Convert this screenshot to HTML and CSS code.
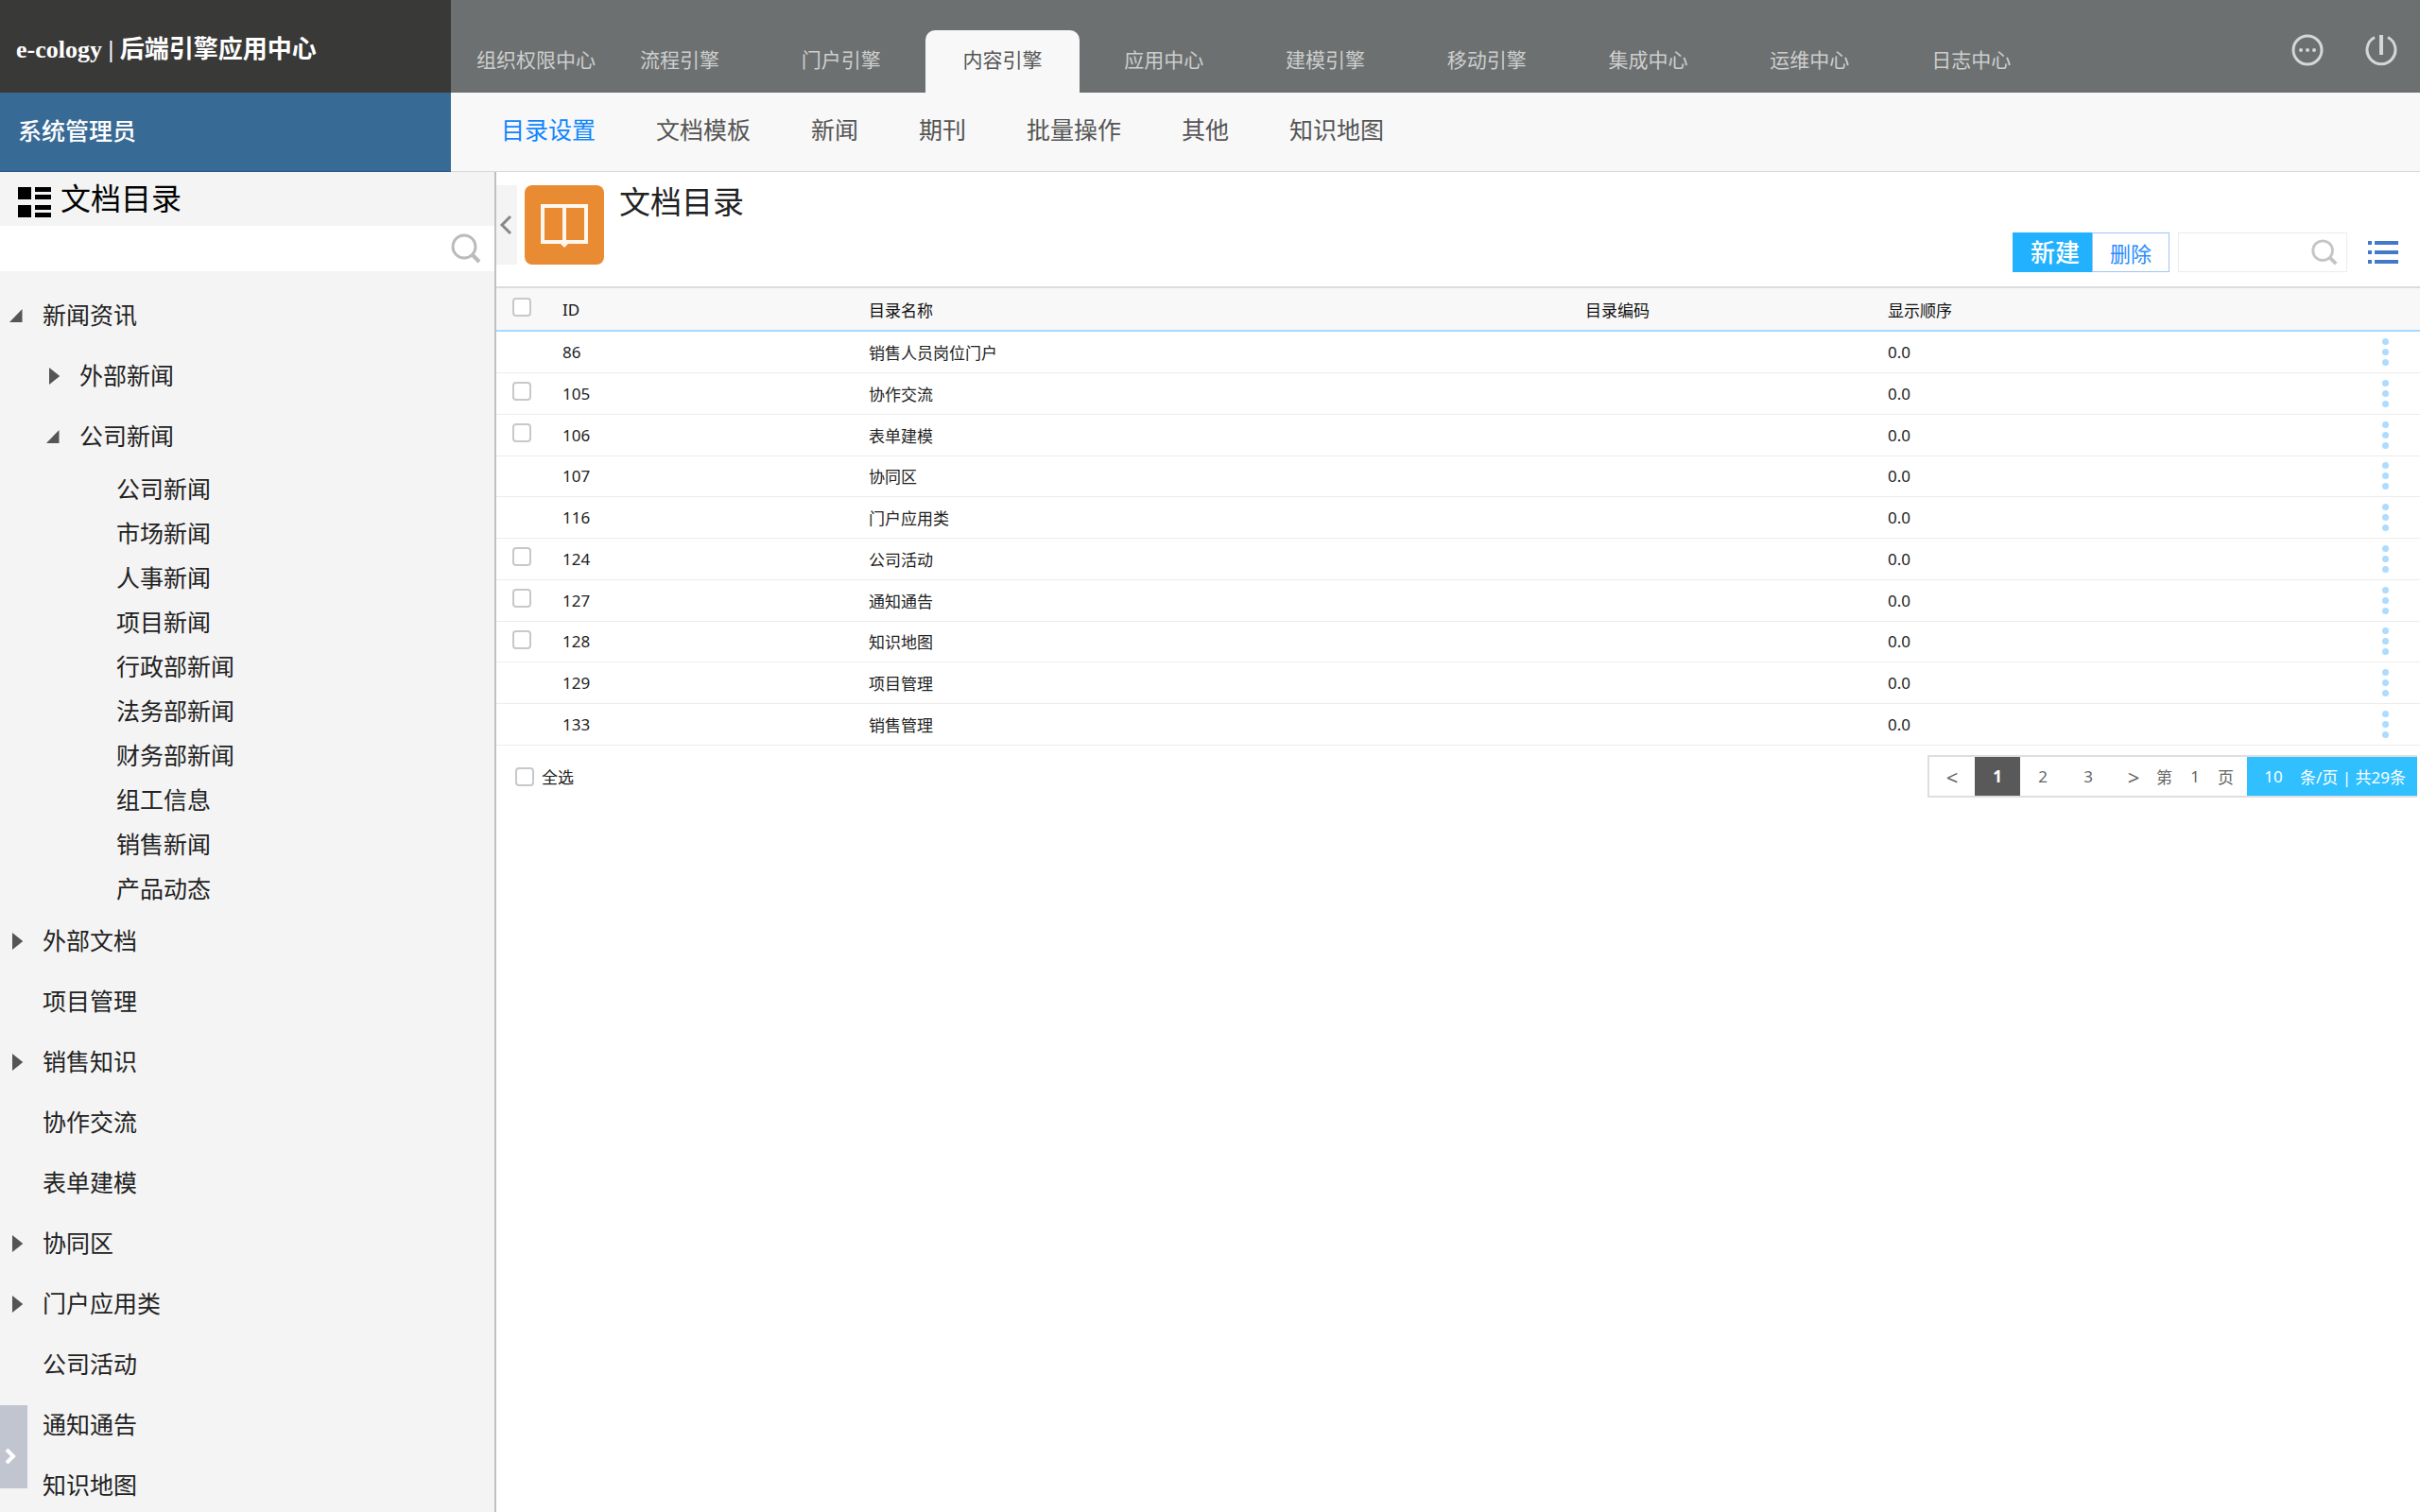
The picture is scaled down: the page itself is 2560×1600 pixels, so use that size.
FILE: index.html
```
<!DOCTYPE html>
<html lang="zh-CN">
<head>
    <meta charset="UTF-8">
    <meta name="viewport" content="width=device-width, initial-scale=1.0">
    <title>后端引擎应用中心</title>
    <link rel="stylesheet" href="styles.css">
</head>

<body>
    <!-- Header Section -->
    <header>
        <div class="brand">
            <h1>e-cology | 后端引擎应用中心</h1>
            <p class="user">系统管理员</p>
        </div>
        <div class="menus">
            <div class="top-bar">
                <nav class="tabs">
                    <a href="#" class="first">组织权限中心</a>
                    <a href="#">流程引擎</a>
                    <a href="#">门户引擎</a>
                    <a href="#" class="active">内容引擎</a>
                    <a href="#">应用中心</a>
                    <a href="#">建模引擎</a>
                    <a href="#">移动引擎</a>
                    <a href="#">集成中心</a>
                    <a href="#">运维中心</a>
                    <a href="#">日志中心</a>
                </nav>
                <div class="actions">
                    <button type="button" aria-label="更多">
                        <svg width="34" height="34" viewBox="0 0 34 34">
                            <circle cx="17" cy="17" r="15" fill="none" stroke="#d5d6d6" stroke-width="3"/>
                            <circle cx="10" cy="17" r="2" fill="#d5d6d6"/>
                            <circle cx="17" cy="17" r="2" fill="#d5d6d6"/>
                            <circle cx="24" cy="17" r="2" fill="#d5d6d6"/>
                        </svg>
                    </button>
                    <button type="button" aria-label="退出">
                        <svg width="34" height="34" viewBox="0 0 34 34" fill="none" stroke="#d5d6d6" stroke-width="3">
                            <path d="M10 3.5A15 15 0 1 0 24 3.5"/>
                            <path d="M17 1v21" stroke-width="4"/>
                        </svg>
                    </button>
                </div>
            </div>
            <nav class="sub-nav">
                <a href="#" class="active">目录设置</a>
                <a href="#">文档模板</a>
                <a href="#">新闻</a>
                <a href="#">期刊</a>
                <a href="#">批量操作</a>
                <a href="#">其他</a>
                <a href="#">知识地图</a>
            </nav>
        </div>
    </header>

    <div class="container">
        <!-- Sidebar -->
        <aside>
            <div class="side-title">
                <svg width="36" height="34" viewBox="0 0 36 34">
                    <path d="M1 1h14v13H1zM1 20h14v13H1zM19 1h17v5H19zM19 9h17v5H19zM19 20h17v5H19zM19 28h17v5H19z"/>
                </svg>
                <h2>文档目录</h2>
            </div>
            <div class="side-search">
                <input type="text" aria-label="搜索目录">
                <svg width="32" height="32" viewBox="0 0 32 32" fill="none" stroke="#bbb">
                    <circle cx="14" cy="14" r="12" stroke-width="3"/>
                    <path d="M23 23l7 7" stroke-width="4"/>
                </svg>
            </div>
            <ul class="tree">
                <li><a href="#" class="open">新闻资讯</a>
                    <ul>
                        <li><a href="#" class="closed">外部新闻</a></li>
                        <li><a href="#" class="open">公司新闻</a>
                            <ul class="leaves">
                                <li><a href="#">公司新闻</a></li>
                                <li><a href="#">市场新闻</a></li>
                                <li><a href="#">人事新闻</a></li>
                                <li><a href="#">项目新闻</a></li>
                                <li><a href="#">行政部新闻</a></li>
                                <li><a href="#">法务部新闻</a></li>
                                <li><a href="#">财务部新闻</a></li>
                                <li><a href="#">组工信息</a></li>
                                <li><a href="#">销售新闻</a></li>
                                <li><a href="#">产品动态</a></li>
                            </ul>
                        </li>
                    </ul>
                </li>
                <li><a href="#" class="closed">外部文档</a></li>
                <li><a href="#">项目管理</a></li>
                <li><a href="#" class="closed">销售知识</a></li>
                <li><a href="#">协作交流</a></li>
                <li><a href="#">表单建模</a></li>
                <li><a href="#" class="closed">协同区</a></li>
                <li><a href="#" class="closed">门户应用类</a></li>
                <li><a href="#">公司活动</a></li>
                <li><a href="#">通知通告</a></li>
                <li><a href="#">知识地图</a></li>
            </ul>
            <button type="button" class="drawer" aria-label="展开">
                <svg width="12" height="18" viewBox="0 0 12 18" fill="none" stroke="#fff" stroke-width="4">
                    <path d="M2 2l7 7-7 7"/>
                </svg>
            </button>
        </aside>

        <!-- Content Section -->
        <main>
            <div class="page-head">
                <button type="button" class="collapse" aria-label="收起">
                    <svg width="14" height="22" viewBox="0 0 14 22" fill="none" stroke="#888" stroke-width="3">
                        <path d="M12 2L3 11l9 9"/>
                    </svg>
                </button>
                <div class="book">
                    <svg width="52" height="48" viewBox="0 0 52 48" fill="none" stroke="#fff7ee" stroke-width="4">
                        <path d="M3 4h46v38H3zM26 4v39"/>
                        <path d="M22 44h8l-4 4z" fill="#fff7ee" stroke="none"/>
                    </svg>
                </div>
                <h2>文档目录</h2>
                <div class="tools">
                    <button type="button" class="btn-new">新建</button>
                    <button type="button" class="btn-del">删除</button>
                    <div class="search">
                        <input type="text" aria-label="搜索">
                        <svg width="30" height="30" viewBox="0 0 32 32" fill="none" stroke="#c4c4c4">
                            <circle cx="14" cy="14" r="11" stroke-width="3"/>
                            <path d="M22 22l7 7" stroke-width="4"/>
                        </svg>
                    </div>
                    <button type="button" class="btn-list" aria-label="列表">
                        <svg width="34" height="28" viewBox="0 0 34 28" fill="#4279c9">
                            <path d="M1 2h4v4H1zM8 2h25v4H8zM1 12h4v4H1zM8 12h25v4H8zM1 22h4v4H1zM8 22h25v4H8z"/>
                        </svg>
                    </button>
                </div>
            </div>

            <table>
                <colgroup>
                    <col class="col-check">
                    <col class="col-id">
                    <col>
                    <col class="col-code">
                    <col class="col-order">
                    <col class="col-more">
                </colgroup>
                <thead>
                    <tr>
                        <th><input type="checkbox" aria-label="全选"></th>
                        <th>ID</th>
                        <th>目录名称</th>
                        <th>目录编码</th>
                        <th>显示顺序</th>
                        <th></th>
                    </tr>
                </thead>
                <tbody id="rows"></tbody>
            </table>

            <div class="table-foot">
                <label><input type="checkbox">全选</label>
                <div class="pager">
                    <button type="button" class="arrow">&lt;</button>
                    <button type="button" class="active">1</button>
                    <button type="button">2</button>
                    <button type="button">3</button>
                    <button type="button" class="arrow">&gt;</button>
                    <label class="jump">第<input type="text" value="1">页</label>
                    <label class="size"><input type="text" value="10">条/页 | 共29条</label>
                </div>
            </div>
        </main>
    </div>

    <script>
        // id, name, can be selected
        const rows = [
            [86, '销售人员岗位门户', false],
            [105, '协作交流', true],
            [106, '表单建模', true],
            [107, '协同区', false],
            [116, '门户应用类', false],
            [124, '公司活动', true],
            [127, '通知通告', true],
            [128, '知识地图', true],
            [129, '项目管理', false],
            [133, '销售管理', false]
        ];

        let html = '';
        rows.forEach(([id, name, selectable]) => {
            html += `<tr>
                <td>${selectable ? `<input type="checkbox" aria-label="${name}">` : ''}</td>
                <td>${id}</td>
                <td>${name}</td>
                <td></td>
                <td>0.0</td>
                <td><button type="button" class="more" aria-label="操作"><i></i><i></i><i></i></button></td>
            </tr>`;
        });
        document.getElementById('rows').innerHTML = html;
    </script>
</body>
</html>
```

FILE: styles.css
```
/* General Styles */
* {
    box-sizing: border-box;
}

body {
    font-family: "Liberation Serif", "Noto Sans CJK SC", serif;
    margin: 0;
    height: 100vh;
    display: flex;
    flex-direction: column;
    overflow: hidden;
    background-color: #fff;
    color: #222;
}

h1, h2, p, ul {
    margin: 0;
    padding: 0;
    font-weight: normal;
}

ul {
    list-style: none;
}

a {
    color: inherit;
    text-decoration: none;
}

button {
    padding: 0;
    border: none;
    background: none;
    color: inherit;
    font: inherit;
    cursor: pointer;
}

svg {
    display: block;
}

input[type="text"] {
    border: none;
    outline: none;
    padding: 0;
    background: none;
    color: inherit;
    font: inherit;
}

input[type="checkbox"] {
    appearance: none;
    display: block;
    width: 20px;
    height: 20px;
    margin: 0;
    border: 2px solid #c8c8c8;
    border-radius: 4px;
    background-color: #fff;
}

/* Header */
header {
    display: flex;
    flex: none;
}

.brand {
    width: 477px;
    color: #fff;
}

.brand h1 {
    height: 98px;
    padding: 0 17px;
    line-height: 106px;
    font-size: 26px;
    font-weight: bold;
    background-color: #393937;
}

.user {
    height: 84px;
    padding: 0 19px;
    line-height: 84px;
    font-size: 25px;
    font-weight: 500;
    background-color: #386a96;
    border-bottom: 1px solid #245a8a;
}

.menus {
    flex: 1;
}

.top-bar {
    display: flex;
    height: 98px;
    background-color: #6c7070;
}

.tabs {
    flex: 1;
    display: flex;
    align-items: flex-end;
    gap: 7px;
    padding-left: 27px;
    font-size: 21px;
    color: #cdcece;
}

.tabs a {
    flex: 1;
    height: 66px;
    line-height: 64px;
    text-align: center;
    border-radius: 10px 10px 0 0;
}

.tabs .first {
    flex: none;
}

.tabs .active {
    background-color: #f8f8f8;
    color: #555;
}

.actions {
    display: flex;
    justify-content: flex-end;
    align-items: center;
    gap: 44px;
    width: 393px;
    padding: 8px 24px 0 0;
}

.sub-nav {
    display: flex;
    gap: 64px;
    height: 84px;
    padding-left: 53px;
    line-height: 82px;
    font-size: 25px;
    color: #555;
    background-color: #f8f8f8;
    border-bottom: 1px solid #d8d8d8;
}

.sub-nav .active {
    color: #0f86ff;
}

.container {
    display: flex;
    flex: 1;
    min-height: 0;
}

/* Sidebar */
aside {
    position: relative;
    width: 525px;
    overflow: hidden;
    background-color: #f4f4f4;
    border-right: 2px solid #c0c0c0;
}

.side-title {
    display: flex;
    align-items: center;
    gap: 10px;
    height: 57px;
    padding-left: 18px;
    color: #000;
}

.side-title svg {
    margin-top: 6px;
}

.side-title h2 {
    font-size: 32px;
    line-height: 56px;
}

.side-search {
    display: flex;
    align-items: center;
    height: 48px;
    padding-right: 14px;
    background-color: #fff;
}

.side-search input {
    flex: 1;
    padding-left: 16px;
    font-size: 25px;
}

.tree {
    padding: 15px 0 0 7px;
    font-size: 25px;
}

.tree a {
    display: flex;
    align-items: center;
    height: 64px;
    padding: 0 0 4px 38px;
}

.tree ul {
    padding-left: 39px;
}

.tree .leaves a {
    height: 47px;
}

/* Tree arrows */
.tree .open,
.tree .closed {
    gap: 20px;
    padding-left: 3px;
}

.tree .open::before,
.tree .closed::before {
    content: "";
    width: 15px;
    height: 14px;
    margin-top: 4px;
    background-color: #555;
}

.tree .open::before {
    clip-path: polygon(0 100%, 90% 0, 90% 100%);
}

.tree .closed::before {
    height: 18px;
    clip-path: polygon(20% 0, 95% 50%, 20% 100%);
}

.drawer {
    position: absolute;
    left: 0;
    bottom: 25px;
    width: 29px;
    height: 88px;
    padding: 20px 0 0 5px;
    background-color: #c1c5cf;
}

/* Page Head */
main {
    flex: 1;
    font-family: "Noto Sans", "Noto Sans CJK SC", sans-serif;
    font-size: 17px;
}

.page-head {
    display: flex;
    align-items: flex-start;
    height: 121px;
    padding-top: 14px;
}

.collapse {
    width: 22px;
    height: 84px;
    margin-right: 8px;
    padding-left: 3px;
    background-color: #f4f4f4;
}

.book {
    display: flex;
    align-items: center;
    justify-content: center;
    width: 84px;
    height: 84px;
    border-radius: 8px;
    background-color: #e98b32;
}

.page-head h2 {
    margin-left: 16px;
    line-height: 36px;
    font-size: 33px;
}

.tools {
    display: flex;
    align-items: center;
    margin: 50px 22px 0 auto;
}

.btn-new,
.btn-del {
    width: 84px;
    height: 42px;
    line-height: 42px;
    color: #fff;
    background-color: #22b1ff;
    font-size: 26px;
    font-weight: 500;
}

.btn-new {
    padding-left: 6px;
}

.btn-del {
    width: 82px;
    color: #2a8bff;
    background-color: #fff;
    border: 1px solid #9fc4f5;
    font-size: 22px;
    font-weight: normal;
}

.search {
    display: flex;
    align-items: center;
    width: 179px;
    height: 42px;
    margin: 0 21px 0 9px;
    padding-right: 8px;
    border: 1px solid #ececec;
}

.search input {
    flex: 1;
    min-width: 0;
    padding-left: 8px;
}

/* Table */
table {
    width: 100%;
    height: 486px;
    table-layout: fixed;
    border-collapse: collapse;
}

.col-check {
    width: 70px;
}

.col-id {
    width: 324px;
}

.col-code {
    width: 320px;
}

.col-order {
    width: 480px;
}

.col-more {
    width: 83px;
}

th, td {
    padding: 0;
    text-align: left;
    font-weight: normal;
    border-bottom: 1px solid #ececec;
}

th {
    height: 46px;
    color: #111;
    background-color: #f8f8f8;
    border-top: 2px solid #dcdcdc;
    border-bottom: 2px solid #a8d9ff;
}

th:first-child,
td:first-child {
    padding: 0 0 4px 17px;
}

.more {
    display: flex;
    flex-direction: column;
    gap: 4px;
    margin-left: 43px;
}

.more i {
    width: 7px;
    height: 7px;
    border-radius: 50%;
    background-color: #addcff;
}

/* Table Foot */
.table-foot {
    display: flex;
    justify-content: space-between;
    padding: 10px 3px 0 20px;
}

.table-foot label {
    display: flex;
    align-items: center;
    gap: 8px;
}

.pager {
    display: flex;
    height: 45px;
    color: #666;
    border: 2px solid #dedede;
    border-right: none;
}

.pager button {
    width: 48px;
}

.pager .arrow {
    font-size: 22px;
}

.pager .active {
    color: #fff;
    background-color: #595959;
    font-weight: bold;
}

.pager label {
    gap: 0;
}

.pager input {
    width: 48px;
    text-align: center;
}

.pager .jump {
    padding-right: 14px;
}

.pager .size {
    padding-right: 12px;
    color: #fff;
    background-color: #30bfff;
}

.pager .size input {
    width: 56px;
}
```
